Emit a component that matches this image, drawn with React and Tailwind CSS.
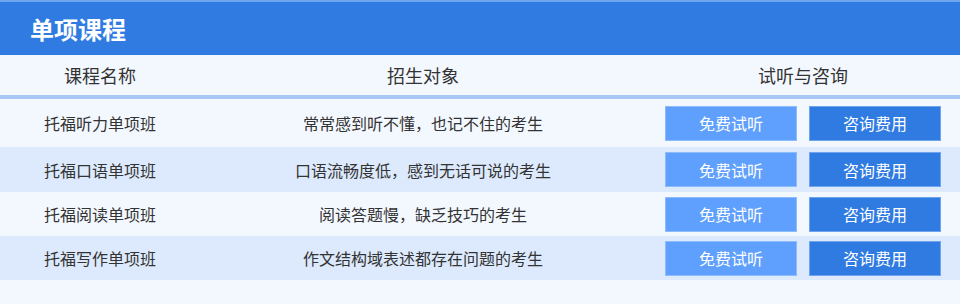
export default function App() {
  const rows = [
    ["托福听力单项班", "常常感到听不懂，也记不住的考生", "h-[48px]"],
    ["托福口语单项班", "口语流畅度低，感到无话可说的考生", "h-[45px]"],
    ["托福阅读单项班", "阅读答题慢，缺乏技巧的考生", "h-[44px]"],
    ["托福写作单项班", "作文结构域表述都存在问题的考生", "h-[44px]"],
  ];
  return (
    <div
      className="w-[960px] h-[304px] bg-[#f3f8ff] text-[#333333]"
      style={{ fontFamily: '"Noto Sans CJK SC", "Noto Sans", sans-serif' }}
    >
      <div className="h-[55px] bg-[#2f7be2] border-t-2 border-[#6fa4ee] flex items-center pl-[30px]">
        <span className="text-white text-[24px] font-bold leading-none">单项课程</span>
      </div>
      <div className="h-[44px] grid grid-cols-[200px_446px_314px] items-center border-b-4 border-[#a7c8f6] text-[18px]">
        <div className="text-center">课程名称</div>
        <div className="text-center">招生对象</div>
        <div className="text-center">试听与咨询</div>
      </div>
      {rows.map((r, i) => (
        <div
          key={i}
          className={`${r[2]} grid grid-cols-[200px_446px_314px] items-center text-[16px] ${
            i % 2 === 1 ? "bg-[#ddeafd]" : "bg-[#f3f8ff]"
          }`}
        >
          <div className="text-center">{r[0]}</div>
          <div className="text-center">{r[1]}</div>
          <div className="flex gap-[12px] pl-[19px]">
            <button className="w-[132px] h-[35px] bg-[#5f9ffd] border border-[#8cbcfb] text-white text-[16px]">
              免费试听
            </button>
            <button className="w-[132px] h-[35px] bg-[#2f7be2] border border-[#6fa4ee] text-white text-[16px]">
              咨询费用
            </button>
          </div>
        </div>
      ))}
    </div>
  );
}
